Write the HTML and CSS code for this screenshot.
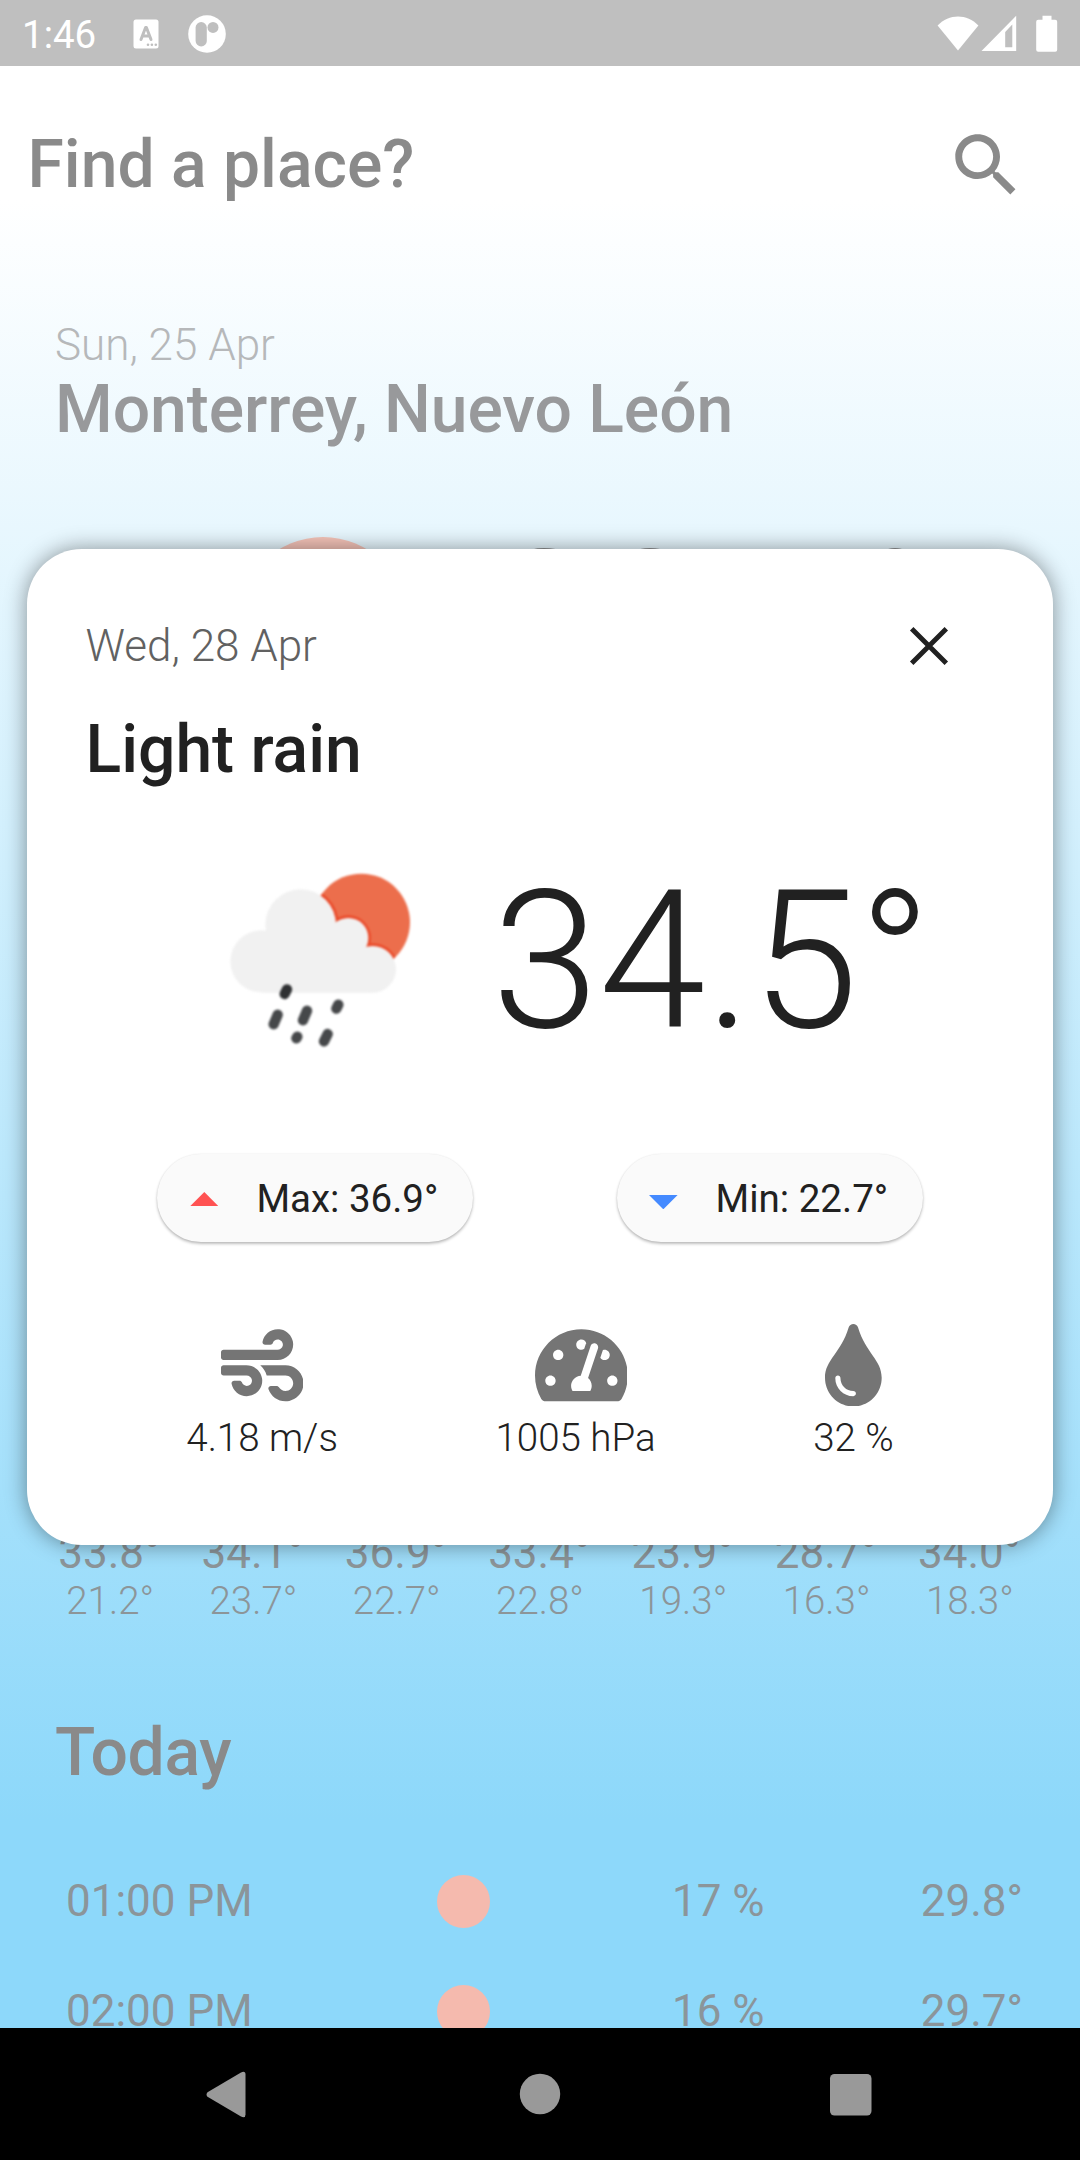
FILE: index.html
```html
<!DOCTYPE html>
<html lang="en">
<head>
<meta charset="utf-8">
<title>Weather</title>
<link rel="stylesheet" href="styles.css">
</head>
<body>
<div class="phone">
  <header class="status">
    <span class="clock">1:46</span>
    <svg class="st-a" width="26" height="30" viewBox="0 0 26 30"><rect x="0.5" y="0.5" width="25" height="29" rx="2.5" fill="#fff"/><path d="M8 20.5l4.6-12h.8l4.6 12M9.8 17h6.4" fill="none" stroke="#bfbfbf" stroke-width="3" stroke-linecap="round" stroke-linejoin="round"/><path d="M13 24.5h12v4h-12z" fill="#fff"/><g fill="#bfbfbf"><circle cx="15" cy="25.8" r="1.3"/><circle cx="18.9" cy="25.8" r="1.3"/><circle cx="22.8" cy="25.8" r="1.3"/></g></svg>
    <svg class="st-p" width="38" height="38" viewBox="0 0 38 38"><circle cx="19" cy="19" r="18.8" fill="#fff"/><rect x="7.6" y="7" width="11.2" height="24.5" rx="5.6" fill="#bfbfbf"/><circle cx="25" cy="12.4" r="5.5" fill="#bfbfbf"/></svg>
    <svg class="st-r" width="122" height="38" viewBox="0 0 122 38" fill="#fff"><path d="M0.6 10.5C12 -1.5 30 -1.5 41.400 10.5L21 35.500z"/><path fill-rule="evenodd" d="M44.500 36L79.200 0.800V36zM68.200 17V32.200H75.300V9.500z"/><path d="M105.500 0.800h9v4h3.700a2 2 0 0 1 2 2v28a2 2 0 0 1-2 2h-17a2 2 0 0 1-2-2v-28a2 2 0 0 1 2-2h4.300z"/></svg>
  </header>

  <main class="app">
    <div class="search">
      <span class="heading">Find a place?</span>
      <svg width="82.5" height="82.5" viewBox="0 0 24 24" fill="#8a8a8a"><path d="M15.500 14h-.79l-.28-.27C15.410 12.590 16 11.110 16 9.500 16 5.910 13.090 3 9.500 3S3 5.910 3 9.500 5.910 16 9.500 16c1.610 0 3.090-.59 4.230-1.570l.27.28v.79l5 4.990L20.490 19l-4.990-5zm-6 0C7.010 14 5 11.990 5 9.500S7.010 5 9.500 5 14 7.010 14 9.500 11.990 14 9.500 14z"/></svg>
    </div>

    <section class="place">
      <div class="date">Sun, 25 Apr</div>
      <div class="city">Monterrey, Nuevo León</div>
    </section>

    <section class="now">
      <span class="now-sun"></span>
      <span class="now-temp">29.5°</span>
    </section>

    <section class="week">
      <div class="day"><span class="hi">33.8°</span><span class="lo">21.2°</span></div>
      <div class="day"><span class="hi">34.1°</span><span class="lo">23.7°</span></div>
      <div class="day"><span class="hi">36.9°</span><span class="lo">22.7°</span></div>
      <div class="day"><span class="hi">33.4°</span><span class="lo">22.8°</span></div>
      <div class="day"><span class="hi">23.9°</span><span class="lo">19.3°</span></div>
      <div class="day"><span class="hi">28.7°</span><span class="lo">16.3°</span></div>
      <div class="day"><span class="hi">34.0°</span><span class="lo">18.3°</span></div>
    </section>

    <section class="today">
      <h2 class="today-title">Today</h2>
      <div class="hour"><span>01:00 PM</span><i class="sun"></i><span>17 %</span><span class="deg">29.8°</span></div>
      <div class="hour"><span>02:00 PM</span><i class="sun"></i><span>16 %</span><span class="deg">29.7°</span></div>
    </section>

    <div class="dialog">
      <div class="dlg-head">
        <span class="dlg-date">Wed, 28 Apr</span>
        <svg class="close" width="66" height="66" viewBox="0 0 66 66"><path d="M15.700 15.700L50.300 50.300M50.300 15.700L15.700 50.300" stroke="#212121" stroke-width="4.900"/></svg>
      </div>
      <div class="dlg-title">Light rain</div>
      <div class="dlg-main">
        <svg class="rain" width="240" height="240" viewBox="0 0 720 720">
          <defs>
            <g id="cloud"><circle cx="302" cy="254" r="106"/><circle cx="184" cy="364" r="93"/><circle cx="445" cy="294" r="60"/><circle cx="518" cy="388" r="70"/><path d="M184 300L302 254 445 294 518 360V458H184z"/></g>
            <clipPath id="disc"><circle cx="484" cy="247" r="146"/></clipPath>
          </defs>
          <circle cx="484" cy="247" r="146" fill="#ec6e4c"/>
          <use href="#cloud" fill="#ea4b2b" stroke="#ea4b2b" stroke-width="16" clip-path="url(#disc)"/>
          <use href="#cloud" fill="#f1f1f1"/>
          <g stroke="#46484a" stroke-width="31" stroke-linecap="round">
            <path d="M261 448l-7 14" stroke="#2e3032"/>
            <path d="M233 524l-12 29M321 512l-12 29M415 494l-6 12M292 590l-3 5M383 582l-11 22"/>
          </g>
        </svg>
        <span class="dlg-temp">34.5°</span>
      </div>
      <div class="chips">
        <div class="chip"><svg width="28.600" height="14.300" viewBox="0 0 10 5"><path d="M0 5L5 0l5 5z" fill="#ff5252"/></svg><span>Max: 36.9°</span></div>
        <div class="chip chip-min"><svg width="28.600" height="14.300" viewBox="0 0 10 5"><path d="M0 0l5 5 5-5z" fill="#448aff"/></svg><span>Min: 22.7°</span></div>
      </div>
      <div class="stats">
        <div class="stat"><svg width="82.500" height="82.500" viewBox="0 0 512 512"><path d="M156.700 256H16c-8.800 0-16 7.200-16 16v32c0 8.800 7.200 16 16 16h142.200c15.900 0 30.800 10.900 33.400 26.600 3.300 20-12.100 37.400-31.600 37.400-14.100 0-26.100-9.200-30.400-21.900-2.100-6.300-8.600-10.100-15.200-10.100H81.600c-9.800 0-17.700 8.800-15.900 18.400 8.600 44.100 47.600 77.600 94.200 77.600 57.100 0 102.700-50.100 95.200-108.600C249 291 205.400 256 156.700 256zM16 224h336c59.700 0 106.800-54.800 93.800-116.700-7.600-36.200-36.900-65.500-73.100-73.100-55.400-11.600-105.100 24.900-114.900 75.500-1.900 9.600 6.100 18.300 15.800 18.300h32.800c6.700 0 13.100-3.800 15.200-10.100C325.900 105.200 337.900 96 352 96c19.400 0 34.900 17.400 31.600 37.400-2.600 15.700-17.400 26.600-33.400 26.600H16c-8.800 0-16 7.200-16 16v32c0 8.800 7.200 16 16 16zm384 32H243.700c19.300 16.600 33.200 38.800 39.800 64H400c26.500 0 48 21.500 48 48s-21.500 48-48 48c-17.900 0-33.300-9.900-41.600-24.400-2.900-5-8.700-7.600-14.500-7.600h-33.800c-10.900 0-19 10.800-15.300 21.100 17.800 50.600 70.500 84.800 129.400 72.300 41.200-8.700 75.100-41.600 84.700-82.700C526 321.500 470.500 256 400 256z"/></svg><span>4.18 m/s</span></div>
        <div class="stat stat-pressure"><svg width="92.800" height="82.500" viewBox="0 0 576 512"><path d="M288 32C128.940 32 0 160.940 0 320c0 52.800 14.250 102.260 39.060 144.800 5.610 9.620 16.300 15.200 27.440 15.200h443c11.140 0 21.830-5.580 27.440-15.200C561.750 422.260 576 372.800 576 320c0-159.060-128.940-288-288-288zm0 64c14.710 0 26.580 10.130 30.320 23.650-1.110 2.260-2.640 4.230-3.450 6.670l-9.220 27.670c-5.130 3.490-10.970 6.010-17.640 6.010-17.670 0-32-14.330-32-32S270.330 96 288 96zM96 384c-17.670 0-32-14.330-32-32s14.330-32 32-32 32 14.330 32 32-14.330 32-32 32zm48-160c-17.670 0-32-14.330-32-32s14.330-32 32-32 32 14.330 32 32-14.330 32-32 32zm246.770-72.410l-61.330 184C343.130 347.330 352 364.540 352 384c0 11.720-3.380 22.550-8.880 32H232.880c-5.500-9.450-8.880-20.280-8.880-32 0-33.940 26.500-61.430 59.900-63.590l61.340-184.010c4.170-12.560 17.730-19.450 30.360-15.170 12.570 4.190 19.350 17.790 15.170 30.360zm14.660 57.200l15.520-46.550c3.470-1.290 7.130-2.230 11.050-2.230 17.670 0 32 14.330 32 32s-14.330 32-32 32c-11.380-.01-20.890-6.280-26.570-15.220zM480 384c-17.670 0-32-14.330-32-32s14.330-32 32-32 32 14.330 32 32-14.330 32-32 32z"/></svg><span>1005 hPa</span></div>
        <div class="stat"><svg width="56.700" height="82.500" viewBox="0 0 352 512"><path d="M205.220 22.090c-7.940-28.780-49.440-30.120-58.440 0C100.010 179.850 0 222.720 0 333.910 0 432.350 78.720 512 176 512s176-79.650 176-178.090c0-111.750-99.790-153.340-146.780-311.820zM176 448c-61.750 0-112-50.250-112-112 0-8.840 7.160-16 16-16s16 7.160 16 16c0 44.110 35.890 80 80 80 8.840 0 16 7.160 16 16s-7.160 16-16 16z"/></svg><span>32 %</span></div>
      </div>
    </div>
  </main>

  <nav class="nav">
    <svg width="1080" height="132" viewBox="0 0 1080 132" fill="#999"><path d="M207.500 64.200L241 44.400Q245.500 42.500 245.500 46.500V86.500Q245.500 90.500 241 88.600L207.500 68.800Q205.500 66.500 207.500 64.200z"/><circle cx="540" cy="66" r="20.200"/><rect x="830" y="46" width="41.500" height="41.500" rx="4.500"/></svg>
  </nav>
</div>
</body>
</html>
```
FILE: styles.css
```css
* { box-sizing: border-box; }
body { margin: 0; font-family: Roboto, sans-serif; }
svg { display: block; flex: none; }
.phone { width: 1080px; height: 2160px; display: flex; flex-direction: column; overflow: hidden; }

.status { height: 66px; flex: none; display: flex; align-items: center; background: #bfbfbf; color: #fff; padding: 0 21px 0 22px; }
.clock { font-size: 38.5px; line-height: 66px; width: 111px; padding-top: 3px; }
.st-a { margin-top: 1px; }
.st-p { margin-left: 29px; margin-top: 1px; }
.st-r { margin-left: auto; margin-top: 1px; }

.app { flex: 1; min-height: 0; position: relative; overflow: hidden; background: linear-gradient(#fff 134px, #8dd8fa 1754px); }

.search { height: 198px; display: flex; align-items: center; justify-content: space-between; padding: 0 52.5px 2px 27.5px; }
.search svg { margin-top: 1.5px; }
.heading { font-size: 66px; font-weight: 500; color: #8a8a8a; line-height: 77px; }

.place { padding: 55px 55px 0; }
.date { font-size: 44px; line-height: 52px; font-weight: 300; color: #b6b8ba; }
.city { font-size: 66px; line-height: 77.5px; font-weight: 500; color: #98999b; letter-spacing: -.05px; }

.now { display: flex; align-items: center; height: 230px; margin-top: 58.500px; padding-left: 238px; }
.now-sun { width: 170px; height: 170px; border-radius: 50%; background: #f4c3b8; }
.now-temp { font-size: 192.5px; line-height: 226px; font-weight: 300; color: #8f9193; margin-left: 84px; padding-bottom: 2px; }

.week { display: grid; grid-template-columns: repeat(7, 1fr); padding: 0 38.500px; margin-top: 790px; }
.day { display: flex; flex-direction: column; align-items: center; color: #8c9599; }
.hi { font-size: 44px; line-height: 52px; padding-right: 1.5px; }
.lo { font-size: 38.5px; line-height: 44px; font-weight: 300; }

.today { margin-top: 91px; }
.today-title { margin: 0 0 55px 55px; font-size: 66px; line-height: 77px; font-weight: 500; color: #8a8a8a; letter-spacing: -.3px; }
.hour { height: 110px; display: grid; grid-template-columns: 370.5px 235.5px 1fr auto; align-items: center; padding: 0 57px 0 66px; font-size: 44px; color: #8b959a; line-height: 52px; }
.sun { width: 53.5px; height: 53.5px; margin-top: .5px; border-radius: 50%; background: #f5baae; }

/* Day detail dialog, floats over the forecast */
.dialog { position: absolute; left: 27px; right: 27.5px; top: 483px; height: 996px; border-radius: 55px; background: #fff; padding: 32px 58px 0 58.5px; box-shadow: 0 0 22px rgba(0,0,0,.42); color: #212121; }
.dlg-head { height: 130px; display: flex; align-items: center; justify-content: space-between; padding-right: 33px; }
.dlg-date { font-size: 44px; line-height: 52px; font-weight: 300; color: #616161; }
.dlg-title { font-size: 66px; line-height: 77.5px; font-weight: 500; }
.dlg-main { display: flex; align-items: center; height: 240px; margin-top: 51.500px; padding-left: 114.500px; }
.rain { filter: blur(.8px); }
.dlg-temp { font-size: 192.5px; line-height: 226px; font-weight: 300; margin-left: 52px; padding-top: 1px; }

.chips { display: flex; justify-content: space-around; margin-top: 73.500px; }
.chip { height: 88px; border-radius: 44px; background: #fafafa; display: flex; align-items: center; gap: 38px; padding: 0 34.5px 0 32.5px; font-size: 38.5px; line-height: 45px; box-shadow: 0 2px 3px rgba(0,0,0,.25), 0 0 2px rgba(0,0,0,.08); }
.chip span { padding-top: 2px; }
.chip svg { margin-top: 3px; }
.chip-min svg { margin-top: 9px; }

.stats { display: flex; justify-content: space-around; margin-top: 82px; padding: 0 22px; }
.stat { display: flex; flex-direction: column; align-items: center; gap: 9px; font-size: 38.5px; line-height: 45px; font-weight: 300; }
.stat svg { fill: #757575; }
.stat-pressure svg { margin-left: 11px; }

.nav { height: 132px; flex: none; background: #000; }
```
